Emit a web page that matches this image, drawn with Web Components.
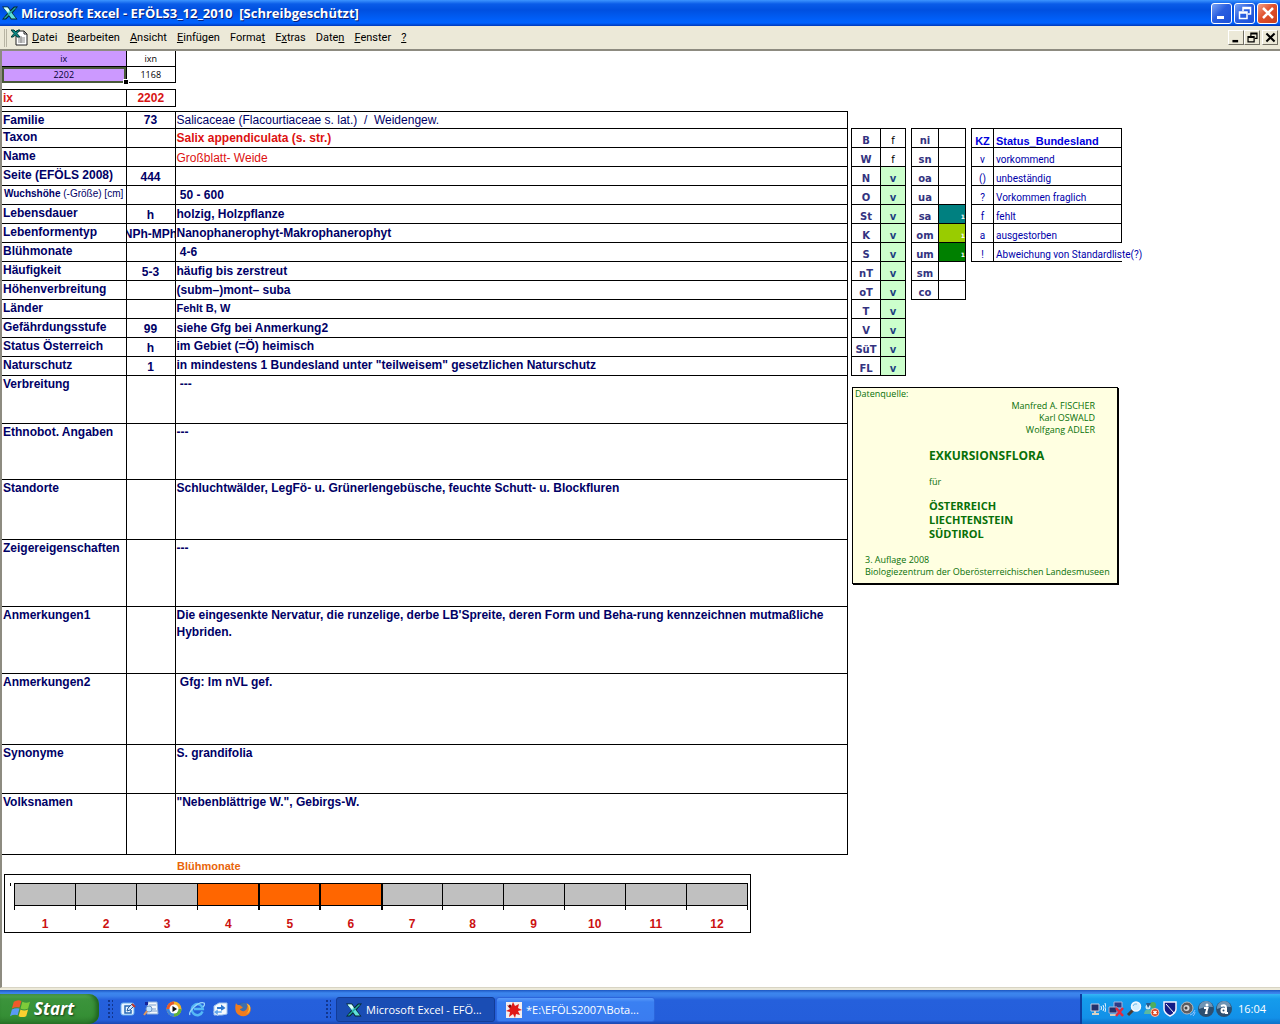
<!DOCTYPE html>
<html lang="de">
<head>
<meta charset="utf-8">
<title>Microsoft Excel - EFÖLS3_12_2010</title>
<style>
    body {
        margin: 0;
        min-height: 100vh;
        display: flex;
        flex-direction: column;
        background: #ece9d8;
        font-family: "Liberation Sans", Arial, sans-serif;
        font-size: 12px;
        --navy: #000066;
        --ui: "Open Sans", "Noto Sans", Tahoma, sans-serif;
        --menu: Roboto, Tahoma, sans-serif;
    }
    xl-sheet {
        flex: 1;
    }
</style>
</head>
<body>
    <xp-titlebar>
        <xp-icon slot="icon" name="excel"></xp-icon>
        Microsoft Excel - EFÖLS3_12_2010&nbsp; [Schreibgeschützt]
        <xp-window-button slot="controls" kind="min" label="Minimieren"></xp-window-button>
        <xp-window-button slot="controls" kind="restore" label="Verkleinern"></xp-window-button>
        <xp-window-button slot="controls" kind="close" label="Schließen"></xp-window-button>
    </xp-titlebar>

    <xl-menubar>
        <xl-menu-item><u>D</u>atei</xl-menu-item>
        <xl-menu-item><u>B</u>earbeiten</xl-menu-item>
        <xl-menu-item><u>A</u>nsicht</xl-menu-item>
        <xl-menu-item><u>E</u>infügen</xl-menu-item>
        <xl-menu-item>Forma<u>t</u></xl-menu-item>
        <xl-menu-item>E<u>x</u>tras</xl-menu-item>
        <xl-menu-item>Date<u>n</u></xl-menu-item>
        <xl-menu-item><u>F</u>enster</xl-menu-item>
        <xl-menu-item><u>?</u></xl-menu-item>
        <xp-window-button slot="controls" flat kind="min" label="Mappe minimieren"></xp-window-button>
        <xp-window-button slot="controls" flat kind="restore" label="Mappe verkleinern"></xp-window-button>
        <xp-window-button slot="controls" flat kind="close" label="Mappe schließen"></xp-window-button>
    </xl-menubar>

    <xl-sheet>
        <xl-index></xl-index>
        <xl-record></xl-record>
        <xl-months from="4" to="6">Blühmonate</xl-months>
        <xl-codes slot="codes" set="laender"></xl-codes>
        <xl-codes slot="codes" set="hoehe"></xl-codes>
        <xl-codes slot="codes" set="status"></xl-codes>
        <xl-note slot="note">
            <span slot="authors">Manfred A. FISCHER</span>
            <span slot="authors">Karl OSWALD</span>
            <span slot="authors">Wolfgang ADLER</span>
            <span slot="title">EXKURSIONSFLORA</span>
            <span slot="lands">ÖSTERREICH</span>
            <span slot="lands">LIECHTENSTEIN</span>
            <span slot="lands">SÜDTIROL</span>
            <span slot="imprint">3. Auflage 2008</span>
            <span slot="imprint">Biologiezentrum der Oberösterreichischen Landesmuseen</span>
        </xl-note>
    </xl-sheet>

    <xp-taskbar>
        <xp-icon slot="quick" name="desktop"></xp-icon>
        <xp-icon slot="quick" name="search"></xp-icon>
        <xp-icon slot="quick" name="media"></xp-icon>
        <xp-icon slot="quick" name="ie"></xp-icon>
        <xp-icon slot="quick" name="sync"></xp-icon>
        <xp-icon slot="quick" name="firefox"></xp-icon>
        <xp-task active><xp-icon slot="icon" name="excel"></xp-icon>Microsoft Excel - EFÖ...</xp-task>
        <xp-task><xp-icon slot="icon" name="irfan"></xp-icon>*E:\EFÖLS2007\Bota...</xp-task>
        <xp-icon slot="tray" name="wlan"></xp-icon>
        <xp-icon slot="tray" name="lan"></xp-icon>
        <xp-icon slot="tray" name="lens"></xp-icon>
        <xp-icon slot="tray" name="people"></xp-icon>
        <xp-icon slot="tray" name="shield"></xp-icon>
        <xp-icon slot="tray" name="speaker"></xp-icon>
        <xp-icon slot="tray" name="info"></xp-icon>
        <xp-icon slot="tray" name="avast"></xp-icon>
        <span slot="clock">16:04</span>
    </xp-taskbar>

<script>
const icons = {
    excel: `<path d="M0 1.500h6L8.500 5 12 1.500h4L10.500 8l5 6.500H9L7 11.500 4 14.500H0L5.500 8z" fill="#06262a"/>
        <path d="M1.500 2.500H5.500L14 13.500H9.500z" fill="#5fe0d8"/><path d="M14.500 2.500L3.500 13.500H1.500L12.500 2.500z" fill="#23aaa2"/>
        <path d="M1.500 2.500h4l2 2.600L6 7.500z" fill="#d8fffb"/>`,
    book: `<path d="M5 2h8l3 3v11H5z" fill="#fff" stroke="#222"/><path d="M13 2v3h3" fill="none" stroke="#222"/>
        <path d="M7 9h7M7 11h7M7 13h7M10 7v7" stroke="#8a8a8a"/>
        <path d="M0 1h3l2 2 2-2h2L6 4.500 9 8H6L4.500 6 2 8H0l3-3.500z" fill="#0c8b86" stroke="#043c3a"/>`,
    desktop: `<rect x="1" y="2" width="13" height="12" rx="2" fill="#e8f4ff" stroke="#6cb0ee"/>
        <path d="M11 5H5v7h6V9" fill="none" stroke="#2468b8" stroke-width="1.500"/><path d="M7 10l1-3 4-4 2 2-4 4z" fill="#cfe6ff" stroke="#245b9c"/><path d="M12 3l3 3" stroke="#c0392b" stroke-width="2"/>`,
    search: `<path d="M5 1h9l1 12H4z" fill="#f3f7fc" stroke="#8fb0da"/><path d="M6 4h7M6 8h7M6 10h8" stroke="#7aa0d0"/>
        <circle cx="6" cy="8" r="3" fill="#bfe3ff" stroke="#6f93c4"/><path d="M4 10l-3 4" stroke="#e0955a" stroke-width="2"/><path d="M2 1h3v3H2z" fill="#13239a"/>`,
    media: `<circle cx="8" cy="8" r="7.500" fill="#f3b32a"/><path d="M8 .5A7.500 7.500 0 0 0 .5 8H8z" fill="#e8582a"/><path d="M.5 8A7.500 7.500 0 0 0 8 15.500V8z" fill="#3a86e0"/>
        <path d="M15.500 8A7.500 7.500 0 0 1 8 15.500V8z" fill="#5eb23c"/><circle cx="8" cy="8" r="4.500" fill="#fff"/><path d="M6.500 5l4.500 3-4.500 3z" fill="#111"/>`,
    ie: `<path d="M13.500 10.500A5.500 5.500 0 1 1 13.800 8H5" fill="none" stroke="#55b8f5" stroke-width="2.500"/>
        <path d="M1 14C-1 11 9 0 15 2c1 1 0 3-1 4" fill="none" stroke="#9ad6fb" stroke-width="1.300"/>`,
    sync: `<path d="M2 5l5-3 8 0v11l-5 1H2z" fill="#f4f9ff" stroke="#9fc2ea"/><path d="M5 6h4V3.500l4.500 3.500L9 10V8H5z" fill="#2f79d0"/><path d="M10 12H6v2.500L1.500 11 6 8v2h4z" fill="#62a6ec" stroke="#fff" stroke-width=".5"/>`,
    firefox: `<circle cx="8" cy="8" r="6.500" fill="#2e62b4"/><circle cx="9" cy="6" r="4" fill="#3d6fae"/>
        <path d="M1 2c1 2 2 2 3 2 2 0 2 2 4 2-1 1-2 2-3 2 1 3 6 3 7-1 1-2 0-4-1-5 6 2 6 9 1.500 12-4 2.500-9.500 1-11.500-3C0 8 0 5 1 2z" fill="#f07c1e"/>
        <path d="M12 3c3 4 2 8-1 10 3-1 5-4 4-8-1-1-2-2-3-2z" fill="#fbc53a"/>`,
    irfan: `<path d="M0 0h16v16H0z" fill="#f4eeee"/><path d="M7 0l2 4 4-2-1 4 4 2-4 1 2 4-4-1-1 4-2-4-4 3 1-5-4-1 4-2-3-4 4 2z" fill="#e01818"/><circle cx="4" cy="4" r="1.500" fill="#721010"/>`,
    wlan: `<path d="M1 3h8v7H1z" fill="#23306a" stroke="#c9cde0"/><path d="M4 10h2v2H4zM2 12h7v2H2z" fill="#d8d2c4"/>
        <path d="M11 5q1 2 0 4M13 4q2 3 0 6M15 2q2 4 0 9" fill="none" stroke="#e8f4ff"/>`,
    lan: `<path d="M6 1h8v6H6z" fill="#2b3a86" stroke="#a8b4da"/><path d="M1 6h8v6H1z" fill="#23306a" stroke="#a8b4da"/><path d="M2 13h7v2H2z" fill="#cfcabc"/>
        <path d="M8 7l7 8M15 7l-7 8" stroke="#e5283a" stroke-width="2.500"/>`,
    lens: `<path d="M7 9l-5 5" stroke="#4a3c38" stroke-width="3"/><circle cx="10" cy="5.500" r="4.500" fill="#d3efff" stroke="#f2f8ff" stroke-width="1.500"/><path d="M7 5q1-3 4-2" fill="none" stroke="#6eb8e8"/>`,
    people: `<circle cx="9" cy="4" r="3" fill="#4fae5b"/><circle cx="4" cy="6" r="2.500" fill="#cfe9f8"/><path d="M0 13q1-6 5-4l3-2q6-1 6 6z" fill="#5cb9a0"/><path d="M2 2l2 5 3-5" fill="#2a5a8a"/>
        <circle cx="11" cy="11.500" r="4" fill="#d9401f" stroke="#f9c0b0"/><path d="M9.500 10l3 3M12.500 10l-3 3" stroke="#fff" stroke-width="1.500"/>`,
    shield: `<path d="M2 1h12v7q0 4-6 7-6-3-6-7z" fill="#131c86" stroke="#f2f4ff" stroke-width="1.500"/><path d="M4 3l8 9" stroke="#fff"/>`,
    speaker: `<circle cx="7" cy="7" r="6" fill="#5c5c60" stroke="#b9b9bc"/><circle cx="6.500" cy="7" r="3" fill="#d6d6d8"/><circle cx="6" cy="7" r="1.500" fill="#444"/><path d="M10 14q3 0 5-5M13 15q2-2 2-4" fill="none" stroke="#8fc2ff"/>`,
    info: `<circle cx="8" cy="8" r="8" fill="#2d4f70"/><path d="M1 8a7 7 0 0 1 14-2Q8 5 1 8z" fill="#6f94b4"/><circle cx="9" cy="4" r="1.500" fill="#fff"/><path d="M6 7h3.500l-1.500 5h1.500" fill="none" stroke="#fff" stroke-width="2"/>`,
    avast: `<circle cx="8" cy="8" r="8" fill="#2d4f70"/><path d="M1 8a7 7 0 0 1 14-2Q8 5 1 8z" fill="#6f94b4"/><circle cx="7.500" cy="9.500" r="2" fill="none" stroke="#fff" stroke-width="2"/><path d="M5 5q5-2 5 2v5l2 0" fill="none" stroke="#fff" stroke-width="2"/>`,
    windows: `<path d="M4 3q4-3 8-1l-2 7q-4-1-8 1z" fill="#f0592a"/><path d="M13 3q4 2 8 0l-2 7q-4 2-8 0z" fill="#7ecb3a"/>
        <path d="M2 11q4-2 8-1l-2 7q-4-1-8 1z" fill="#5a9af5"/><path d="M11 11q4 2 8 0l-2 7q-4 2-8 0z" fill="#fbd030"/>`,
    min: `<path d="M3 11h7v3H3z" fill="currentColor"/>`,
    restore: `<path d="M6 6V2.500h7.500V9H11M6 3.500h7.500M2.500 7H10v6.500H2.500zM2.500 8H10" fill="none" stroke="currentColor" stroke-width="1.500"/>`,
    close: `<path d="M3 3l10 10M13 3L3 13" stroke="currentColor" stroke-width="2.500"/>`
};

function svg(name, size = 16, box = 16) {
    return `<svg width="${size}" height="${size}" viewBox="0 0 ${box} ${box}" aria-hidden="true">${icons[name]}</svg>`;
}

class Base extends HTMLElement {
    constructor() {
        super();
        this.attachShadow({ mode: 'open' });
    }

    connectedCallback() {
        this.shadowRoot.innerHTML = this.render();
    }
}

class Icon extends Base {
    render() {
        return `
            <style>
                :host { display: block; width: 16px; height: 16px; }
                svg { display: block; }
            </style>
            ${svg(this.getAttribute('name'))}`;
    }
}
customElements.define('xp-icon', Icon);

class WindowButton extends Base {
    render() {
        const kind = this.getAttribute('kind');
        const flat = this.hasAttribute('flat');
        return `
            <style>
                :host { display: block; }
                :host([flat][kind="close"]) { margin-left: 2px; }
                button {
                    display: flex;
                    align-items: center;
                    justify-content: center;
                    width: 21px;
                    height: 21px;
                    padding: 0;
                    color: #fff;
                    border: 1px solid #fff;
                    border-radius: 3px;
                    background: linear-gradient(135deg, #7ba4f5, #2a5fe0 45%, #1b50d8);
                }
                .close { background: linear-gradient(135deg, #f0a088, #e0502c 45%, #c8401c); }
                .flat {
                    width: 16px;
                    height: 15px;
                    color: #000;
                    background: #ece9d8;
                    border-width: 1px;
                    border-color: #fff #716f64 #716f64 #fff;
                    border-radius: 0;
                }
                svg { flex: none; }
            </style>
            <button class="${kind} ${flat ? 'flat' : ''}" aria-label="${this.getAttribute('label')}">
                ${svg(kind, flat ? 13 : 16)}
            </button>`;
    }
}
customElements.define('xp-window-button', WindowButton);

class Titlebar extends Base {
    render() {
        return `
            <style>
                :host {
                    display: flex;
                    align-items: center;
                    height: 26px;
                    padding: 0 2px;
                    gap: 3px;
                    background: linear-gradient(#3d95ff, #0a5ce8 4px, #0050e0 10px, #0060fa 20px, #0062ff 23px, #0038b8);
                    color: #fff;
                    font: bold 13px/16px var(--ui);
                    text-shadow: 1px 1px #0a1f78;
                }
                .text { flex: 1; }
                .controls { display: flex; gap: 2px; }
            </style>
            <slot name="icon"></slot>
            <span class="text"><slot></slot></span>
            <div class="controls"><slot name="controls"></slot></div>`;
    }
}
customElements.define('xp-titlebar', Titlebar);

class Menubar extends Base {
    render() {
        return `
            <style>
                :host {
                    display: flex;
                    align-items: center;
                    height: 23px;
                    padding: 0 2px 0 4px;
                    background: #ece9d8;
                    border-bottom: 2px solid #8d8b80;
                }
                .grip {
                    width: 1px;
                    height: 18px;
                    margin-right: 4px;
                    border: solid #b8b5a4;
                    border-width: 0 1px;
                }
                nav { display: flex; flex: 1; gap: 10px; margin-left: 3px; }
                .controls { display: flex; }
                svg { display: block; }
            </style>
            <div class="grip"></div>
            ${svg('book', 18, 18)}
            <nav><slot></slot></nav>
            <div class="controls"><slot name="controls"></slot></div>`;
    }
}
customElements.define('xl-menubar', Menubar);

class MenuItem extends Base {
    render() {
        return `
            <style>
                :host { display: block; }
                button {
                    padding: 0;
                    border: 0;
                    background: none;
                    color: #000;
                    font: 11px/16px var(--menu);
                }
            </style>
            <button><slot></slot></button>`;
    }
}
customElements.define('xl-menu-item', MenuItem);

class Sheet extends Base {
    render() {
        return `
            <style>
                :host {
                    display: grid;
                    grid-template-columns: minmax(0, 846fr) minmax(0, 432fr);
                    align-items: start;
                    background: #fff;
                    border-left: 2px solid #8d8b80;
                    border-bottom: 1px solid #d8d4c4;
                    margin-bottom: 2px;
                }
                aside { padding: 77px 0 0 3px; }
                .codes { display: flex; align-items: flex-start; gap: 5px; margin-bottom: 11px; }
            </style>
            <main><slot></slot></main>
            <aside>
                <div class="codes"><slot name="codes"></slot></div>
                <slot name="note"></slot>
            </aside>`;
    }
}
customElements.define('xl-sheet', Sheet);

class IndexCells extends Base {
    render() {
        return `
            <style>
                :host { display: block; }
                table { border-collapse: collapse; table-layout: fixed; width: 174px; }
                .first { width: 124px; }
                td, th {
                    height: 15px;
                    padding: 0;
                    border: 1px solid #000;
                    border-left: 0;
                    text-align: center;
                    font: 9px/14px var(--ui);
                    color: #000;
                }
                .top td { border-top: 0; }
                .key { background: #cc99ff; color: #003; }
                .selected { outline: 2px solid #4a5a3a; outline-offset: -2px; position: relative; }
                .selected::after {
                    content: "";
                    position: absolute;
                    right: -2px;
                    bottom: -2px;
                    width: 4px;
                    height: 4px;
                    background: #000;
                    outline: 1px solid #fff;
                }
                .active { margin-top: 6px; }
                .active th, .active td { font: bold 12px/16px "Liberation Sans", sans-serif; color: #d81414; height: 16px; }
                .active th { text-align: left; padding-left: 1px; }
            </style>
            <table>
                <colgroup><col class="first"><col></colgroup>
                <tr class="top"><td class="key">ix</td><td>ixn</td></tr>
                <tr><td class="key selected">2202</td><td>1168</td></tr>
            </table>
            <table class="active">
                <colgroup><col class="first"><col></colgroup>
                <tr><th>ix</th><td>2202</td></tr>
            </table>`;
    }
}
customElements.define('xl-index', IndexCells);

// label, code, text, row height, classes
const record = [
    ['Familie', '73', 'Salicaceae (Flacourtiaceae s. lat.)&nbsp; / &nbsp;Weidengew.', 17, 'plain'],
    ['Taxon', '', 'Salix appendiculata (s. str.)', 19, 'red'],
    ['Name', '', 'Großblatt- Weide', 19, 'plain red'],
    ['Seite (EFÖLS 2008)', '444', '', 19],
    ['<small><b>Wuchshöhe</b> (-Größe) [cm]</small>', '', '&nbsp;50 - 600', 19],
    ['Lebensdauer', 'h', 'holzig, Holzpflanze', 19],
    ['Lebenformentyp', 'NPh-MPh', 'Nanophanerophyt-Makrophanerophyt', 19],
    ['Blühmonate', '', '&nbsp;4-6', 19],
    ['Häufigkeit', '5-3', 'häufig bis zerstreut', 19],
    ['Höhenverbreitung', '', '(subm–)mont– suba', 19],
    ['Länder', '', 'Fehlt B, W', 19, 'top small'],
    ['Gefährdungsstufe', '99', 'siehe Gfg bei Anmerkung2', 19],
    ['Status Österreich', 'h', 'im Gebiet (=Ö) heimisch', 19, 'top'],
    ['Naturschutz', '1', 'in mindestens 1 Bundesland unter "teilweisem" gesetzlichen Naturschutz', 19, 'top'],
    ['Verbreitung', '', '&nbsp;---', 48, 'top'],
    ['Ethnobot. Angaben', '', '---', 56, 'top'],
    ['Standorte', '', 'Schluchtwälder, LegFö- u. Grünerlengebüsche, feuchte Schutt- u. Blockfluren', 60, 'top'],
    ['Zeigereigenschaften', '', '---', 67, 'top'],
    ['Anmerkungen1', '', "Die eingesenkte Nervatur, die runzelige, derbe LB'Spreite, deren Form und Beha-rung kennzeichnen mutmaßliche Hybriden.", 67, 'top'],
    ['Anmerkungen2', '', '&nbsp;Gfg: Im nVL gef.', 71, 'top'],
    ['Synonyme', '', 'S. grandifolia', 49, 'top'],
    ['Volksnamen', '', '"Nebenblättrige W.", Gebirgs-W.', 61, 'top']
];

class RecordTable extends Base {
    render() {
        const rows = record.map(([label, code, text, height, cls = '']) => `
            <tr style="height: ${height}px">
                <th>${label}</th>
                <td class="code"><div>${code}</div></td>
                <td class="text ${cls}">${text}</td>
            </tr>`).join('');
        return `
            <style>
                :host { display: block; margin-top: 4px; }
                table { border-collapse: collapse; table-layout: fixed; width: 100%; }
                .label { width: 124px; }
                .codes { width: 49px; }
                th, td {
                    padding: 0 1px;
                    border: 1px solid #000;
                    border-left: 0;
                    color: var(--navy);
                    font: bold 12px/16px "Liberation Sans", sans-serif;
                    text-align: left;
                    vertical-align: top;
                }
                th { white-space: nowrap; }
                .code { padding: 0; vertical-align: bottom; }
                .code div { display: flex; justify-content: center; overflow: hidden; white-space: nowrap; }
                .text { vertical-align: bottom; line-height: 17px; }
                .text.top { vertical-align: top; }
                .plain { font-weight: normal; line-height: 16px; }
                .red { color: #dd1111; }
                .small { font-size: 11px; line-height: 16px; }
                small { display: block; padding-left: 1px; font: 10px/16px "Liberation Sans", sans-serif; }
            </style>
            <table>
                <colgroup><col class="label"><col class="codes"><col></colgroup>
                ${rows}
            </table>`;
    }
}
customElements.define('xl-record', RecordTable);

const codeSets = {
    laender: {
        widths: [29, 25],
        rows: ['B', 'W', 'N', 'O', 'St', 'K', 'S', 'nT', 'oT', 'T', 'V', 'SüT', 'FL']
            .map((land, i) => i < 2 ? [land, 'f', 'absent'] : [land, 'v', 'present'])
    },
    hoehe: {
        widths: [27, 27],
        rows: [['ni', ''], ['sn', ''], ['oa', ''], ['ua', ''], ['sa', '1', 'teal'], ['om', '1', 'lime'],
            ['um', '1', 'green'], ['sm', ''], ['co', '']]
    },
    status: {
        widths: [22, 128],
        rows: [['KZ', 'Status_Bundesland', 'head'], ['v', 'vorkommend'], ['()', 'unbeständig'], ['?', 'Vorkommen fraglich'],
            ['f', 'fehlt'], ['a', 'ausgestorben'], ['!', 'Abweichung von Standardliste(?)', 'open']]
    }
};

class Codes extends Base {
    render() {
        const name = this.getAttribute('set');
        const { widths, rows } = codeSets[name];
        return `
            <style>
                :host { display: block; }
                table { border-collapse: collapse; table-layout: fixed; width: ${widths[0] + widths[1] + 1}px; }
                th, td {
                    height: 18px;
                    padding: 0;
                    border: 1px solid #000;
                    color: #333380;
                    font: bold 10px/12px "DejaVu Sans", sans-serif;
                    text-align: center;
                    vertical-align: bottom;
                    white-space: nowrap;
                }
                td.absent { color: #000; font-weight: normal; }
                td.present { background: #ccffcc; color: #1f3f80; }
                td.teal { background: #008080; }
                td.lime { background: #99cc00; }
                td.green { background: #008000; }
                td.teal, td.lime, td.green { color: #fff; font-size: 6px; text-align: right; }
                .status th, .status td { color: #0000aa; font: 10px/12px Roboto, sans-serif; }
                .status td { text-align: left; padding-left: 2px; }
                .status .head th, .status .head td { font: bold 11px/12px "Liberation Sans", sans-serif; color: #0000dd; }
                .status .open td { border-right: 0; }
            </style>
            <table class="${name}">
                <colgroup><col style="width: ${widths[0]}px"><col style="width: ${widths[1]}px"></colgroup>
                ${rows.map(([key, value, cls = '']) => `<tr class="${cls}"><th>${key}</th><td class="${cls}">${value}</td></tr>`).join('')}
            </table>`;
    }
}
customElements.define('xl-codes', Codes);

class Note extends Base {
    render() {
        return `
            <style>
                :host {
                    display: block;
                    box-sizing: border-box;
                    width: 266px;
                    margin-left: 1px;
                    padding: 0 2px 5px;
                    background: #ffffe1;
                    border: 1px solid #000;
                    box-shadow: 1px 1px #000;
                    color: #087008;
                    font: 9px/12px var(--ui);
                }
                div { display: flex; flex-direction: column; }
                .authors { align-items: flex-end; padding-right: 20px; }
                .middle { padding-left: 74px; }
                .title { margin: 12px 0; font-size: 12px; line-height: 16px; font-weight: bold; }
                .lands { margin: 11px 0 13px; font-size: 11px; line-height: 14px; font-weight: bold; }
                .imprint { padding-left: 10px; white-space: nowrap; }
            </style>
            <div>Datenquelle:</div>
            <div class="authors"><slot name="authors"></slot></div>
            <div class="middle">
                <div class="title"><slot name="title"></slot></div>
                <div>für</div>
                <div class="lands"><slot name="lands"></slot></div>
            </div>
            <div class="imprint"><slot name="imprint"></slot></div>`;
    }
}
customElements.define('xl-note', Note);

class Months extends Base {
    render() {
        const from = +this.getAttribute('from');
        const to = +this.getAttribute('to');
        let months = '';
        for (let m = 1; m <= 12; m++) {
            months += `<li class="${m >= from && m <= to ? 'on' : ''}"><i></i>${m}</li>`;
        }
        return `
            <style>
                :host { display: block; margin-top: 3px; }
                h2 { margin: 0 0 0 175px; font: bold 11px/16px "Liberation Sans", sans-serif; color: #e8650a; }
                .frame {
                    box-sizing: border-box;
                    width: 88.3%;
                    margin-left: 2px;
                    padding: 8px 2px 0 5px;
                    border: 1px solid #000;
                    display: flex;
                    align-items: flex-start;
                }
                .axis { width: 1px; height: 3px; background: #000; margin-right: 3px; }
                ul {
                    flex: 1;
                    display: grid;
                    grid-template-columns: repeat(12, minmax(0, 1fr));
                    margin: 0 0 22px;
                    padding: 0;
                    list-style: none;
                    border-right: 1px solid #000;
                    height: 27px;
                }
                li {
                    height: 27px;
                    border-left: 1px solid #000;
                    text-align: center;
                    font: bold 12px/36px "Liberation Sans", sans-serif;
                    color: #cc1111;
                }
                i { display: block; height: 21px; background: #c0c0c0; border: solid #000; border-width: 1px 0; }
                .on i { background: #ff6600; }
                .on + li { border-left-width: 2px; }
            </style>
            <h2><slot></slot></h2>
            <div class="frame"><div class="axis"></div><ul>${months}</ul></div>`;
    }
}
customElements.define('xl-months', Months);

class Task extends Base {
    render() {
        return `
            <style>
                :host { display: block; flex: 0 1 159px; min-width: 0; }
                button {
                    display: flex;
                    align-items: center;
                    gap: 4px;
                    width: 100%;
                    height: 25px;
                    padding: 0 9px;
                    border: 1px solid #2c66dc;
                    border-radius: 3px;
                    background: linear-gradient(#5a9bfa, #3a80f2 4px, #3a7cf0);
                    color: #fff;
                    font: 11px/16px var(--ui);
                    white-space: nowrap;
                    overflow: hidden;
                }
                :host([active]) button { background: #1a4db4; border-color: #133c96; }
            </style>
            <button><slot name="icon"></slot><span><slot></slot></span></button>`;
    }
}
customElements.define('xp-task', Task);

class Taskbar extends Base {
    render() {
        return `
            <style>
                :host {
                    display: flex;
                    align-items: flex-end;
                    height: 34px;
                    background: linear-gradient(#1c55c0, #3c86ee 3px, #3a80ea 6px, #2560dc 10px, #245edb 30px, #1c48b0);
                    color: #fff;
                    font: 11px/16px var(--ui);
                }
                .start {
                    display: flex;
                    align-items: center;
                    gap: 4px;
                    width: 99px;
                    height: 30px;
                    padding: 0 0 0 10px;
                    border: 0;
                    border-radius: 0 10px 10px 0;
                    background: linear-gradient(#5fb25f, #3c943c 5px, #358f35 22px, #2c7a2c);
                    box-shadow: inset -3px 0 4px #1f621f;
                    color: #fff;
                    font: italic bold 17px/20px "Open Sans", sans-serif;
                    text-shadow: 1px 1px 2px #173f17;
                }
                .dots {
                    width: 5px;
                    height: 20px;
                    margin: 0 0 4px;
                    background: radial-gradient(circle at 1px 1px, #12368e 1px, transparent 1px) 0 0 / 4px 4px;
                }
                .start + .dots { margin-left: 9px; }
                .quick { display: flex; gap: 7px; margin-left: 7px; padding-bottom: 7px; width: 206px; }
                .tasks { display: flex; flex: 1; gap: 1px; margin-left: 5px; padding-bottom: 2px; }
                .tray {
                    display: flex;
                    align-items: center;
                    gap: 2px;
                    height: 30px;
                    padding: 0 14px 0 8px;
                    border-left: 2px solid #0c3ea0;
                    background: linear-gradient(#35b5f5, #159cec 5px, #1290e8 24px, #0d70c8);
                }
                .clock { margin-left: 4px; }
            </style>
            <button class="start">${svg('windows', 20, 21)}Start</button>
            <div class="dots"></div>
            <div class="quick"><slot name="quick"></slot></div>
            <div class="dots"></div>
            <div class="tasks"><slot></slot></div>
            <div class="tray"><slot name="tray"></slot><span class="clock"><slot name="clock"></slot></span></div>`;
    }
}
customElements.define('xp-taskbar', Taskbar);
</script>
</body>
</html>
